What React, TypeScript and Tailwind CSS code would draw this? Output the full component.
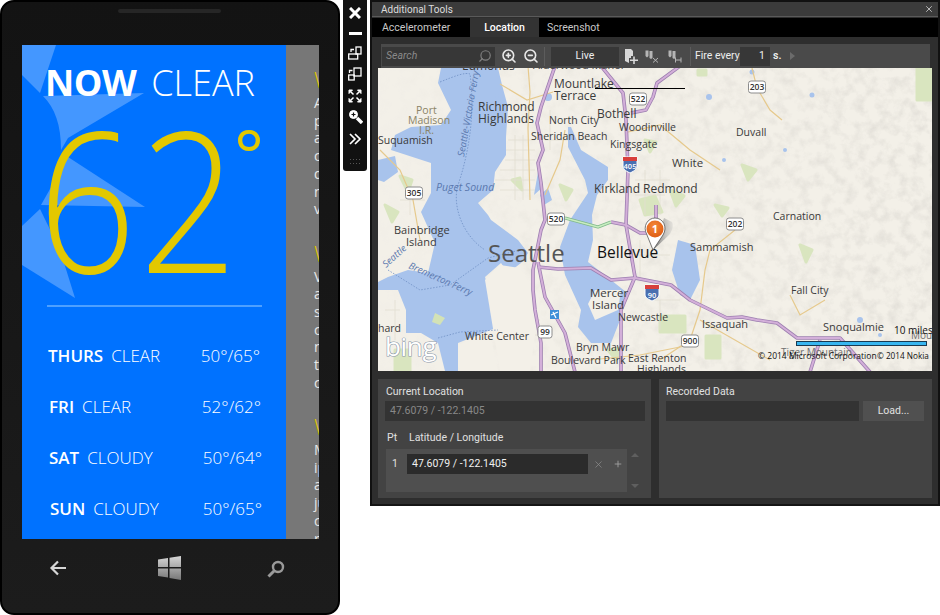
import React from 'react';
import { Search, ZoomIn, ZoomOut, X, Plus } from 'lucide-react';

const forecast = [
  { day: 'THURS', sky: 'CLEAR', temp: '50°/65°', left: 'ml-[26px]', right: 'mr-[26px]' },
  { day: 'FRI', sky: 'CLEAR', temp: '52°/62°', left: 'ml-[27px]', right: 'mr-[25px]' },
  { day: 'SAT', sky: 'CLOUDY', temp: '50°/64°', left: 'ml-[27px]', right: 'mr-[24px]' },
  { day: 'SUN', sky: 'CLOUDY', temp: '50°/65°', left: 'ml-[28px]', right: 'mr-[24px]' },
];

const stripBlocks = [
  ['A', 'p', 'a', 'c', 'd', 'n', 'v'],
  ['V', 'a', 's', 'c', 'n', 't', 'c'],
  ['M', 'ip', 'a', 'ju', 'c', 'r'],
];

const roads = [
  'M555 66 L541 107 L537 123 L543 150 L538 163 L541 183 L545 220 L541 230 L533 270 L533 290 L535 310 L541 343 L541 372',
  'M538 262 L545 297 L565 333 L575 372',
  'M601 66 L623 93 L626 120 L628 170 L626 225 L635 277 L621 310 L621 372',
  'M538 267 L558 269 L591 268 L611 280 L635 278 L671 285 L690 300 L727 318 L742 317 L757 320 L777 323 L797 338 L815 338 L840 338 L870 372',
  'M611 222 L626 225 L640 233 L656 233 L656 205',
  'M680 66 L657 83 L653 97 L646 110 L631 113',
  'M820 340 L810 372',
];

const minorRoads = [
  'M528 66 L530 92 L528 128 L530 200',
  'M500 84 L527 100 L553 92',
  'M628 132 L660 125 L690 150 L720 170',
  'M752 68 L757 88 L770 110 L782 120',
  'M735 230 L710 250 L705 270 L700 310 L690 340 L660 360',
  'M380 150 L400 170 L413 200 L420 240',
  'M700 320 L770 360 M790 295 L800 315 L825 300',
  'M545 195 L560 160 L565 130',
  'M590 360 L640 355 L690 345',
];

// pale street grid around the towns
const streets =
  'M505 150 H535 M505 160 H535 M500 170 H535 M495 180 H535 M500 190 H535 M508 140 H535 M515 135 V200 M523 135 V200 ' +
  'M505 290 H530 M505 305 H535 M510 320 H540 M515 280 V370 M525 280 V370 M500 335 H540 M545 140 H570 M550 110 V150 ' +
  'M635 180 H670 M635 195 H665 M645 170 V215 M660 170 V215 M630 255 H670 M640 240 V280 M650 300 H680 M660 300 V330 ' +
  'M400 200 H425 M410 190 V215 M385 310 H400 M395 300 V340';

const parks = [
  'M917 68 H932 V100 H917 Z',
  'M660 316 H685 V332 H660 Z',
  'M706 336 H720 V358 H706 Z',
  'M698 70 H706 V75 H698 Z',
  'M395 350 H410 V371 H395 Z',
  'M590 300 L602 302 L598 312 Z',
  'M640 200 L655 196 L662 212 L645 215 Z',
  'M400 176 L412 180 L408 192 Z',
  'M385 205 L398 212 L392 222 Z',
  'M512 180 L520 178 L522 190 Z',
  'M670 190 L684 196 L676 206 Z',
  'M715 205 L728 208 L722 216 Z',
  'M742 165 L756 170 L748 180 Z',
  'M560 185 L572 190 L566 200 Z',
  'M645 140 L656 142 L650 152 Z',
  'M608 350 L620 348 L616 360 Z',
  'M800 245 L812 250 L806 262 Z',
];

const labels: { t: string; x: number; y: number; s: number; c?: string; i?: boolean }[] = [
  { t: 'Edmonds', x: 462, y: 70, s: 12 },
  { t: 'Alderwood Manor', x: 533, y: 69, s: 11 },
  { t: 'Mountlake', x: 554, y: 88, s: 12 },
  { t: 'Terrace', x: 554, y: 100, s: 12 },
  { t: 'Richmond', x: 478, y: 111, s: 12 },
  { t: 'Highlands', x: 478, y: 123, s: 12 },
  { t: 'Bothell', x: 597, y: 118, s: 12 },
  { t: 'North City', x: 549, y: 124, s: 10.5 },
  { t: 'Sheridan Beach', x: 531, y: 140, s: 10.5 },
  { t: 'Woodinville', x: 619, y: 131, s: 10.5 },
  { t: 'Kingsgate', x: 610, y: 148, s: 10.5 },
  { t: 'White', x: 672, y: 167, s: 11.5 },
  { t: 'Duvall', x: 736, y: 136, s: 10.5 },
  { t: 'Kirkland Redmond', x: 594, y: 193, s: 12 },
  { t: 'Carnation', x: 773, y: 220, s: 10.5 },
  { t: 'Sammamish', x: 690, y: 251, s: 11 },
  { t: 'Fall City', x: 791, y: 294, s: 10.5 },
  { t: 'Snoqualmie', x: 823, y: 331, s: 11 },
  { t: 'Issaquah', x: 702, y: 328, s: 11 },
  { t: 'Newcastle', x: 618, y: 321, s: 10.5 },
  { t: 'East Renton', x: 628, y: 362, s: 10.5 },
  { t: 'Highlands', x: 637, y: 373, s: 10.5 },
  { t: 'Mercer', x: 590, y: 297, s: 11.5 },
  { t: 'Island', x: 592, y: 309, s: 11.5 },
  { t: 'Bainbridge', x: 394, y: 234, s: 11 },
  { t: 'Island', x: 406, y: 246, s: 11 },
  { t: 'Suquamish', x: 378, y: 144, s: 10.5 },
  { t: 'Port', x: 416, y: 114, s: 10.5, c: '#8a8366' },
  { t: 'Madison', x: 408, y: 124, s: 10.5, c: '#8a8366' },
  { t: 'I.R.', x: 419, y: 134, s: 10.5, c: '#8a8366' },
  { t: 'Puget Sound', x: 436, y: 191, s: 10.5, c: '#5a78ae', i: true },
  { t: 'White Center', x: 465, y: 340, s: 10.5 },
  { t: 'Bryn Mawr', x: 576, y: 351, s: 10.5 },
  { t: 'Boulevard Park', x: 551, y: 364, s: 10.5 },
  { t: 'hard', x: 378, y: 332, s: 10.5 },
  { t: 'Tiger Mountain', x: 781, y: 356, s: 10, c: '#6f6f6f' },
  { t: 'Mount', x: 911, y: 339, s: 10, c: '#6f6f6f' },
];

const shields = [
  { t: '522', x: 638, y: 99, w: 17 },
  { t: '203', x: 757, y: 87, w: 17 },
  { t: '305', x: 414, y: 193, w: 17 },
  { t: '520', x: 556, y: 219, w: 17 },
  { t: '99', x: 545, y: 332, w: 14 },
  { t: '900', x: 690, y: 341, w: 17 },
  { t: '202', x: 735, y: 224, w: 17 },
];

function MapDrawing() {
  return (
    <svg viewBox="378 68 554 303" className="block w-[554px] h-[303px]" style={{ fontFamily: '"Open Sans", sans-serif' }}>
      <defs>
        <filter id="hills" x="0" y="0" width="100%" height="100%">
          <feTurbulence type="fractalNoise" baseFrequency="0.09" numOctaves="4" seed="7" />
          <feColorMatrix values="0 0 0 0 0.55  0 0 0 0 0.53  0 0 0 0 0.5  1.8 0 0 0 -0.75" />
        </filter>
        <linearGradient id="fadeEast" x1="0" x2="1">
          <stop offset="0" stopColor="#fff" stopOpacity="0.05" />
          <stop offset="0.5" stopColor="#fff" stopOpacity="0.6" />
          <stop offset="1" stopColor="#fff" stopOpacity="1" />
        </linearGradient>
        <mask id="eastMask">
          <rect x="378" y="68" width="554" height="303" fill="url(#fadeEast)" />
        </mask>
        <radialGradient id="pinFill" cx="0.45" cy="0.35" r="0.7">
          <stop offset="0" stopColor="#f58a3a" />
          <stop offset="1" stopColor="#dc5a12" />
        </radialGradient>
        <linearGradient id="pinShadow" x1="0" x2="1">
          <stop offset="0" stopColor="#555" />
          <stop offset="1" stopColor="#bbb" stopOpacity="0.3" />
        </linearGradient>
      </defs>
      <rect x="378" y="68" width="554" height="303" fill="#f3f0e8" />
      <rect x="378" y="68" width="554" height="303" filter="url(#hills)" mask="url(#eastMask)" opacity="0.45" />

      <g fill="#d9e5bf" stroke="#d9e5bf" strokeWidth="3" strokeLinejoin="round">
        {parks.map((d) => (
          <path key={d} d={d} />
        ))}
      </g>
      <path d={streets} fill="none" stroke="#e2ded2" strokeWidth="0.8" />

      {/* water */}
      <g fill="#a8c3ec">
        <path d="M441 68 L498 68 L502 85 L508 107 L506 137 L506 155 L495 172 L493 190 L478 203 L488 215 L491 220 L518 240 L528 253 L521 263 L508 273 L501 263 L485 277 L491 297 L498 327 L458 343 L458 371 L445 371 L438 343 L421 333 L406 333 L406 310 L398 290 L378 290 L378 282 L388 277 L408 270 L428 273 L435 243 L421 212 L431 193 L431 163 L391 150 L395 135 L411 127 L441 125 L451 110 L438 83 Z" />
        <path d="M378 160 L395 156 L398 172 L384 182 L378 180 Z" />
        <path d="M568 127 L571 127 L581 150 L608 167 L608 180 L597 195 L592 215 L593 240 L588 262 L611 280 L626 292 L620 320 L611 343 L591 343 L578 327 L581 310 L565 275 L560 247 L570 220 L588 193 L585 180 L568 147 Z" />
        <path d="M678 240 L695 245 L700 280 L690 300 L680 295 L672 270 Z" />
        <path d="M538 172 L543 187 L534 195 Z" />
        <path d="M497 92 L500 100 L494 100 Z" />
        <path d="M540 195 L548 188 L552 200 L544 205 Z" />
        <circle cx="548" cy="97" r="4" />
        <circle cx="752" cy="72" r="2.5" />
        <circle cx="709" cy="97" r="3" />
        <circle cx="724" cy="160" r="2" />
        <circle cx="785" cy="150" r="2" />
        <circle cx="812" cy="95" r="2.5" />
        <circle cx="860" cy="320" r="3" />
        <circle cx="880" cy="335" r="2" />
      </g>

      {/* islands */}
      <g fill="#f3f0e8">
        <path d="M595 290 L621 290 L618 310 L595 320 L588 304 Z" />
        <path d="M458 345 L490 332 L498 371 L460 371 Z" />
        <path d="M485 280 L500 265 L520 268 L540 300 L530 371 L500 371 Z" />
      </g>
      <path d="M435 313 L445 318 L440 325 L432 322 Z" fill="#d3e2b6" />

      {/* ferries */}
      <g fill="none" stroke="#6f8fc4" strokeWidth="0.8" strokeDasharray="1.5 1.5">
        <path d="M440 82 C 455 76 465 72 470 74 C 475 110 470 150 458 185 C 452 205 462 235 485 250" />
        <path d="M388 270 L420 290 L450 285 L488 258 L520 250" />
        <path d="M438 338 L460 332 L498 330" />
      </g>

      <g fill="none" stroke="#e6c98c" strokeWidth="1.2">
        {minorRoads.map((d) => (
          <path key={d} d={d} />
        ))}
      </g>

      {/* highways */}
      <g fill="none" strokeLinejoin="round">
        {roads.map((d) => (
          <path key={d} d={d} stroke="#9d7fb0" strokeWidth="3.6" />
        ))}
        {roads.map((d) => (
          <path key={`${d}-in`} d={d} stroke="#d3afd9" strokeWidth="2" />
        ))}
        <path d="M565 218 L598 227 L611 222" stroke="#7fb98a" strokeWidth="3.2" />
        <path d="M565 218 L598 227 L611 222" stroke="#c8ecc0" strokeWidth="1.6" />
      </g>

      <g fill="#333">
        {labels.map((l) => (
          <text key={`${l.t}-${l.x}`} x={l.x} y={l.y} fontSize={l.s} fill={l.c ?? '#3a3a3a'} fontStyle={l.i ? 'italic' : 'normal'}>
            {l.t}
          </text>
        ))}
      </g>
      <text x="0" y="0" fontSize="9.5" fill="#5a78ae" fontStyle="italic" transform="translate(464 157) rotate(-80)">
        Seattle-Victoria Ferry
      </text>
      <text x="0" y="0" fontSize="9.5" fill="#5a78ae" fontStyle="italic" transform="translate(386 268) rotate(-42)">
        Seattle
      </text>
      <text x="0" y="0" fontSize="9.5" fill="#5a78ae" fontStyle="italic" transform="translate(408 268) rotate(24)">
        Bremerton Ferry
      </text>
      <text x="488" y="262" fontSize="24" fill="#555">
        Seattle
      </text>
      <text x="597" y="258" fontSize="15.5" fill="#111">
        Bellevue
      </text>

      {shields.map((s) => (
        <g key={s.t}>
          <rect x={s.x - s.w / 2} y={s.y - 6} width={s.w} height={12} rx="2.5" fill="#fff" stroke="#8c8c8c" />
          <text x={s.x} y={s.y + 3} fontSize="8.5" fontWeight="600" textAnchor="middle" fill="#333">
            {s.t}
          </text>
        </g>
      ))}

      {/* interstate shields */}
      <g>
        <path d="M623 157 H637 V166 C637 170 632 172 630 173 C628 172 623 170 623 166 Z" fill="#4a6fb0" stroke="#fff" />
        <rect x="623" y="157" width="14" height="4" fill="#d8403c" />
        <text x="630" y="169" fontSize="7.5" fontWeight="600" textAnchor="middle" fill="#fff">405</text>
        <path d="M645 285 H659 V295 C659 298 654 300 652 301 C650 300 645 298 645 295 Z" fill="#4a6fb0" stroke="#fff" />
        <rect x="645" y="285" width="14" height="4" fill="#d8403c" />
        <text x="652" y="298" fontSize="7.5" fontWeight="600" textAnchor="middle" fill="#fff">90</text>
      </g>

      {/* airport */}
      <rect x="550" y="310" width="9" height="9" fill="#3f8fd8" />
      <path d="M551 315 L558 312 M553 312 L556 318" stroke="#fff" strokeWidth="1.3" />

      {/* pin */}
      <path d="M653 250 L664 218 L672 222 C674 226 672 232 668 236 Z" fill="url(#pinShadow)" opacity="0.85" />
      <path d="M653 250 L647 235 C642 226 648 218 655 218 C663 218 668 227 663 235 Z" fill="#fff" stroke="#555" strokeWidth="0.8" />
      <circle cx="655" cy="229" r="8.5" fill="url(#pinFill)" />
      <text x="655" y="233" fontSize="11" fontWeight="700" textAnchor="middle" fill="#fff">1</text>

      {/* bing logo */}
      <text x="385" y="356" fontSize="26" fontWeight="400" fill="#fff" stroke="#8b97a8" strokeWidth="1.2" paintOrder="stroke" letterSpacing="-0.3">
        bing
      </text>

      {/* scale and copyright */}
      <text x="894" y="334" fontSize="10" fill="#111">10 miles</text>
      <rect x="796.5" y="341.5" width="130" height="4" fill="#38b6f0" stroke="#1a3a50" />
      <text x="758" y="359" fontSize="8.5" fill="#111">© 2014 Microsoft Corporation</text>
      <text x="877" y="359" fontSize="8.2" fill="#111">© 2014 Nokia</text>
      <path d="M595 88.5 H685" stroke="#000" strokeWidth="1" />
    </svg>
  );
}

function Phone() {
  return (
    <div className="relative w-[340px] h-[615px] shrink-0 rounded-[14px] border-2 border-black bg-linear-to-b from-[#131313] to-[#1c1c1c]" style={{ fontFamily: '"Open Sans", sans-serif' }}>
      <div className="absolute left-[116px] top-[7px] w-[103px] h-[4px] rounded-full bg-[#262626]" />
      <div className="ml-[20px] mt-[43px] flex w-[297px] h-[494px] overflow-hidden">
        <div className="relative w-[264px] shrink-0 bg-[#0072ff] overflow-hidden">
          <svg viewBox="22 45 264 494" className="absolute inset-0 w-[264px] h-[494px]" fill="#4497ff">
            <path d="M22 45 L56 45 L40 93 L22 75 Z" />
            <path d="M43 96 L144 93 L68 138 L61 150 C61 125 55 108 43 96 Z" />
            <path d="M68 157 L145 207 L41 205 Z" />
            <path d="M40 209 L60 250 L75 298 L22 265 L22 226 Z" />
          </svg>
          <div className="relative flex flex-col">
            <div className="ml-[23px] mt-[16px] flex items-center gap-[15px] text-[36px] leading-[44px] text-white">
              <span className="font-bold tracking-[-0.5px]">NOW</span>
              <span className="font-light">CLEAR</span>
            </div>
            <div className="relative ml-[16px] mt-[-5px] h-[197px] text-[195px] leading-[196px] font-[360] text-[#e3c800]">
              <span className="inline-block origin-left scale-x-[0.88] tracking-[4px]">62</span>
              <span className="absolute left-[196px] top-[-45px] text-[70px] leading-[196px] font-normal">°</span>
            </div>
            <div className="ml-[25px] mt-[8px] w-[215px] h-[2px] bg-[#4ea0ff]" />
            <div className="mt-[34px] flex flex-col gap-[21px]">
              {forecast.map((row) => (
                <div key={row.day} className="flex items-center justify-between h-[30px] whitespace-nowrap text-[17px] text-white">
                  <div className={`${row.left} flex gap-[8px]`}>
                    <span className="font-semibold">{row.day}</span>
                    <span className="font-light">{row.sky}</span>
                  </div>
                  <span className={`${row.right} font-light`}>{row.temp}</span>
                </div>
              ))}
            </div>
          </div>
        </div>
        <div className="flex-1 bg-[#777777] pl-[28px] pt-[19px] overflow-hidden whitespace-nowrap">
          {stripBlocks.map((lines, i) => (
            <div key={i} className="h-[173.5px]">
              <div className="text-[22px] leading-[30px] font-light text-[#e3c800]">W</div>
              {lines.map((l, j) => (
                <div key={j} className="text-[14px] leading-[17.7px] text-[#e8e8e8]">
                  {l}
                </div>
              ))}
            </div>
          ))}
        </div>
      </div>
      <div className="ml-[20px] mt-[17px] flex w-[297px] items-center">
        <svg viewBox="0 0 18 16" className="ml-[27px] w-[18px] h-[16px]" fill="none" stroke="#d6d6d6" strokeWidth="2.2">
          <path d="M17 8 H3 M9 1.5 L2.5 8 L9 14.5" />
        </svg>
        <svg viewBox="0 0 24 24" className="ml-[91px] w-[24px] h-[24px]">
          <defs>
            <linearGradient id="win" x1="0" y1="0" x2="0" y2="1">
              <stop offset="0" stopColor="#d6d6d6" />
              <stop offset="1" stopColor="#777" />
            </linearGradient>
          </defs>
          <path d="M0 3.5 L10 2 V11 H0 Z M11.5 1.8 L23 0 V11 H11.5 Z M0 12.5 H10 V21.5 L0 20 Z M11.5 12.5 H23 V24 L11.5 22 Z" fill="url(#win)" />
        </svg>
        <svg viewBox="0 0 18 18" className="ml-[85px] mt-[2px] w-[18px] h-[18px]" fill="none" stroke="#9a9a9a" strokeWidth="2.4">
          <circle cx="11" cy="7" r="5" />
          <path d="M7 11 L1.5 16.5" strokeWidth="3" />
        </svg>
      </div>
    </div>
  );
}

function SideBar() {
  return (
    <div className="ml-[3px] flex h-[171px] w-[24px] shrink-0 flex-col items-center rounded-b-[3px] bg-[#111111] pt-[7px] text-white">
      <svg viewBox="0 0 12 12" className="w-[12px] h-[12px]" stroke="#fff" strokeWidth="3">
        <path d="M1 1 L11 11 M11 1 L1 11" />
      </svg>
      <div className="mt-[13px] h-[3px] w-[13px] bg-white" />
      <svg viewBox="0 0 14 14" className="mt-[11px] w-[14px] h-[14px]" fill="none" stroke="#fff" strokeWidth="1.3">
        <rect x="0.7" y="8" width="9" height="5" />
        <rect x="8" y="1" width="5" height="7" />
        <path d="M3 6 L3 3.5 L6 3.5" />
      </svg>
      <svg viewBox="0 0 14 14" className="mt-[7px] w-[14px] h-[14px]" fill="none" stroke="#fff" strokeWidth="1.3">
        <rect x="6" y="1" width="7" height="8" />
        <rect x="0.7" y="8" width="5.5" height="5" />
        <path d="M1.5 6 L1.5 3.5 L4.5 3.5" />
      </svg>
      <svg viewBox="0 0 14 14" className="mt-[8px] w-[14px] h-[14px]" fill="#fff" stroke="#fff">
        <path d="M1 1 H4.5 L1 4.5 Z M13 1 H9.5 L13 4.5 Z M1 13 H4.5 L1 9.5 Z M13 13 H9.5 L13 9.5 Z" />
        <path d="M3 3 L5.5 5.5 M11 3 L8.5 5.5 M3 11 L5.5 8.5 M11 11 L8.5 8.5" strokeWidth="1.5" />
      </svg>
      <svg viewBox="0 0 15 15" className="mt-[6px] w-[15px] h-[15px]" fill="none" stroke="#fff">
        <circle cx="5.5" cy="5.5" r="4" fill="#fff" />
        <path d="M9 9 L14 14" strokeWidth="3.4" />
        <path d="M3.5 5.5 H7.5 M5.5 3.5 V7.5" stroke="#111" strokeWidth="1.2" />
      </svg>
      <svg viewBox="0 0 12 12" className="mt-[9px] w-[12px] h-[12px]" fill="none" stroke="#fff" strokeWidth="1.7">
        <path d="M1 1 L6 6 L1 11 M6 1 L11 6 L6 11" />
      </svg>
      <div className="mt-[14px] grid grid-cols-4 gap-x-[2px] gap-y-[3px]">
        {Array.from({ length: 8 }).map((_, i) => (
          <span key={i} className="h-[1px] w-[1px] bg-[#555]" />
        ))}
      </div>
    </div>
  );
}

function PinIcon({ mark }: { mark: 'plus' | 'x' | 'h' }) {
  if (mark === 'plus') {
    return (
      <svg viewBox="0 0 13 15" className="w-[13px] h-[15px]" fill="#d8d8d8">
        <path d="M0 0 H6 L8 2 V7 H6 V9 H4 V14 L0 12 Z" />
        <path d="M5 10.5 H13 V12 H5 Z M8.2 7.5 H9.8 V15 H8.2 Z" />
      </svg>
    );
  }
  return (
    <svg viewBox="0 0 14 13" className="w-[14px] h-[13px]" fill="none" stroke="#b5b5b5">
      <path d="M0.5 0.5 H3.5 V6 L2 7.5 L0.5 6 Z M4.5 1 H7.5 V8 L6 9 L4.5 8 Z" fill="#b5b5b5" stroke="none" />
      {mark === 'x' ? <path d="M8 8 L13 12.5 M13 8 L8 12.5" /> : <path d="M7.5 7.5 V12.5 M13 7.5 V12.5 M7.5 10 H13" />}
    </svg>
  );
}

function ToolStrip() {
  return (
    <div className="ml-[3px] mr-[2px] flex h-[24px] items-center whitespace-nowrap bg-[#4a4a4a] pl-[1px] text-[10.5px] text-[#eeeeee]">
      <div className="flex h-[19px] w-[113px] items-center justify-between bg-[#373737] pl-[4px] pr-[3px] text-[#8a8a8a]">
        <span className="italic">Search</span>
        <Search size={14} strokeWidth={2} className="-scale-x-100 text-[#808080]" />
      </div>
      <ZoomIn size={16} strokeWidth={2.4} className="ml-[6px] text-[#e8e8e8]" />
      <ZoomOut size={16} strokeWidth={2.4} className="ml-[6px] text-[#e8e8e8]" />
      <div className="ml-[5px] h-[19px] w-[1px] bg-[#5c5c5c]" />
      <div className="ml-[6px] flex h-[19px] w-[68px] items-center justify-center bg-[#373737]">Live</div>
      <div className="ml-[6px] flex w-[14px]">
        <PinIcon mark="plus" />
      </div>
      <div className="ml-[6px] flex w-[14px]">
        <PinIcon mark="x" />
      </div>
      <div className="ml-[9px] flex w-[14px]">
        <PinIcon mark="h" />
      </div>
      <div className="ml-[8px] h-[19px] w-[1px] bg-[#5c5c5c]" />
      <span className="ml-[4px] w-[45px]">Fire every</span>
      <div className="flex h-[19px] w-[30px] items-center justify-end bg-[#373737] pr-[5px]">1</div>
      <span className="ml-[3px] font-semibold">s.</span>
      <div className="ml-[9px] h-0 w-0 border-y-[4px] border-l-[5px] border-y-transparent border-l-[#6b6b6b]" />
    </div>
  );
}

function LocationPanel() {
  return (
    <div className="w-[273px] h-[119px] bg-[#434343] text-[10.5px] text-[#e0e0e0]">
      <div className="pl-[8px] pt-[6px] leading-[14px]">Current Location</div>
      <div className="ml-[7px] mt-[2px] flex h-[20px] w-[260px] items-center bg-[#333333] pl-[5px] text-[#888888]">47.6079 / -122.1405</div>
      <div className="flex pl-[9px] pt-[10px] leading-[14px]">
        <span className="w-[22px]">Pt</span>
        <span>Latitude / Longitude</span>
      </div>
      <div className="flex mt-[4px]">
        <div className="ml-[8px] flex h-[43px] w-[241px] items-start bg-[#4f4f4f] pt-[5px]">
          <span className="flex h-[20px] w-[21px] items-center pl-[6px]">1</span>
          <div className="flex h-[20px] w-[181px] items-center bg-[#2b2b2b] pl-[5px] text-[#f0f0f0]">47.6079 / -122.1405</div>
          <X size={11} strokeWidth={1.5} className="ml-[5px] mt-[5px] text-[#8f8f8f]" />
          <Plus size={10} strokeWidth={2} className="ml-[9px] mt-[5px] text-[#a5a5a5]" />
        </div>
        <div className="ml-[4px] flex h-[43px] flex-col justify-between py-[4px]">
          <div className="h-0 w-0 border-x-[4px] border-b-[4px] border-x-transparent border-b-[#5f5f5f]" />
          <div className="h-0 w-0 border-x-[4px] border-t-[4px] border-x-transparent border-t-[#5f5f5f]" />
        </div>
      </div>
    </div>
  );
}

function RecordedPanel() {
  return (
    <div className="w-[273px] h-[119px] bg-[#434343] text-[10.5px] text-[#e0e0e0]">
      <div className="pl-[7px] pt-[6px] leading-[14px]">Recorded Data</div>
      <div className="ml-[7px] mt-[2px] flex gap-[4px]">
        <div className="h-[20px] w-[193px] bg-[#333333]" />
        <div className="flex h-[20px] w-[61px] items-center justify-center bg-[#505050]">Load...</div>
      </div>
    </div>
  );
}

function ToolsWindow() {
  return (
    <div className="ml-[3px] h-[506px] w-[570px] shrink-0 border-2 border-[#111111] border-b-[#151515] bg-[#2e2e2e]" style={{ fontFamily: 'Roboto, sans-serif' }}>
      <div className="flex h-[15px] items-center justify-between border-b border-[#5a5a5a] bg-[#3b3b3b] pl-[9px] pr-[4px] text-[10px] text-[#dddddd]">
        <span>Additional Tools</span>
        <X size={10} strokeWidth={2} className="text-[#cfcfcf]" />
      </div>
      <div className="mt-[1px] flex h-[19px] bg-black text-[10.5px] text-[#c8c8c8]">
        <div className="flex w-[98px] items-center pl-[10px]">Accelerometer</div>
        <div className="flex w-[69px] items-center justify-center bg-[#333333] font-medium text-white">Location</div>
        <div className="flex items-center pl-[8px]">Screenshot</div>
      </div>
      <div className="pl-[6px] pt-[7px]">
        <div className="w-[554px]">
          <ToolStrip />
          <MapDrawing />
        </div>
        <div className="mt-[8px] flex gap-[8px]">
          <LocationPanel />
          <RecordedPanel />
        </div>
      </div>
    </div>
  );
}

export default function App() {
  return (
    <div className="flex h-[615px] w-[940px] items-start overflow-hidden bg-white">
      <Phone />
      <SideBar />
      <ToolsWindow />
    </div>
  );
}
